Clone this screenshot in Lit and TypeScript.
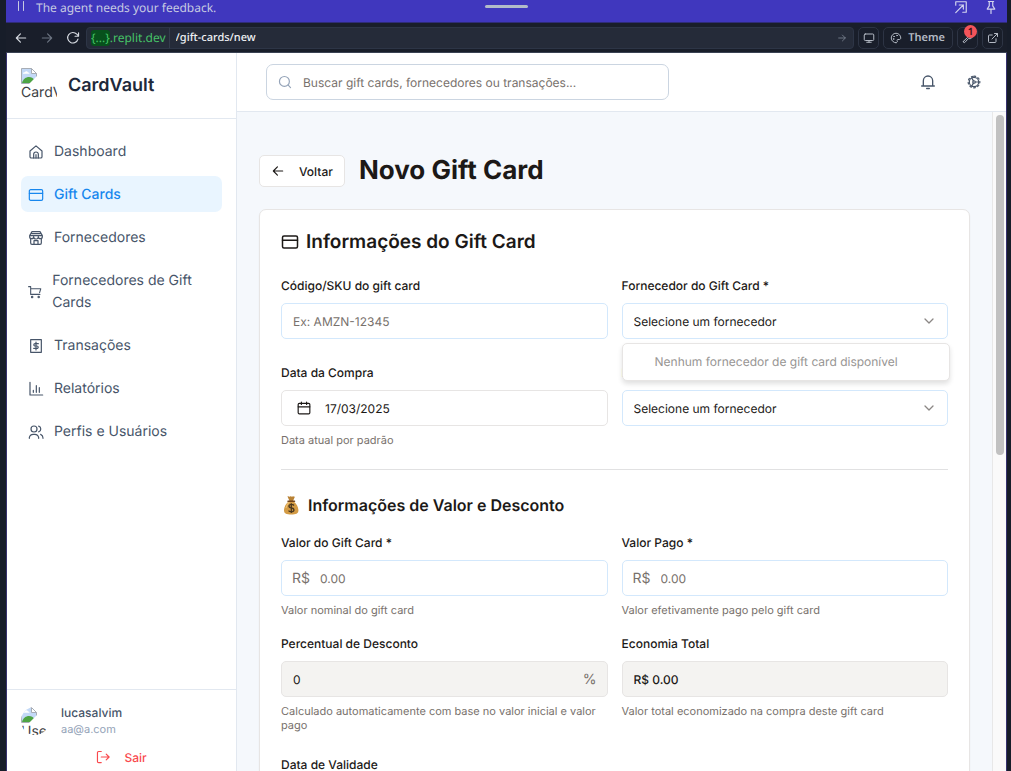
import { LitElement, html, svg, css, nothing, type SVGTemplateResult } from "lit";
import { customElement, property, state } from "lit/decorators.js";
import { classMap } from "lit/directives/class-map.js";

const icons: Record<string, SVGTemplateResult> = {
  home: svg`<path d="M3 10.5 12 2.8l9 7.7V19a2 2 0 0 1-2 2H5a2 2 0 0 1-2-2z"/><path d="M8.500 21v-5.500a3.500 3.500 0 0 1 7 0V21M12 16v5"/>`,
  card: svg`<rect x="2" y="4" width="20" height="16" rx="2"/><path d="M2 9.500h20"/>`,
  store: svg`<path d="M6 2.500h12l3.500 6v1.500a3 3 0 0 1-6 0 3.500 3.500 0 0 1-7 0 3 3 0 0 1-6 0V8.500zM2.500 8.500h19M4 13v6.500a2 2 0 0 0 2 2h12a2 2 0 0 0 2-2V13M9 21.500V16h6v5.500M6 5.500h12"/>`,
  cart: svg`<path d="M1 3h3.500v13H20M4.500 6.500h17L19.500 13"/><circle cx="7" cy="20.500" r="1.200"/><circle cx="18" cy="20.500" r="1.200"/>`,
  bill: svg`<path d="M4 2.500h16v19H4z"/><path d="M15.500 8.500H10.500a1.750 1.750 0 0 0 0 3.500h3a1.750 1.750 0 0 1 0 3.500H8.500M12 6v12"/>`,
  chart: svg`<path d="M3 2v19h19M8 14v3M12.500 7v10M17 10v7"/>`,
  users: svg`<circle cx="9" cy="7.500" r="4.500"/><path d="M2 21.500v-1a6 6 0 0 1 6-5h2a6 6 0 0 1 6 5v1M16 3.200a4.500 4.500 0 0 1 0 8.600M19 15.500a6 6 0 0 1 3.500 5.500v.5"/>`,
  logout: svg`<path d="M9 2.500H4.500a2 2 0 0 0-2 2v15a2 2 0 0 0 2 2H9M9 12h13M17.500 7l5 5-5 5"/>`,
  search: svg`<circle cx="11" cy="11" r="8.500"/><path d="m17.500 17.500 4 4"/>`,
  bell: svg`<path d="M5 17.500V10a7 7 0 0 1 14 0v7.500M2.500 18h19M10 21.700h4"/>`,
  gear: svg`<circle cx="12" cy="12" r="8"/><circle cx="12" cy="12" r="2.200"/><path d="M14 12h6M11 10 8 5M11 14l-3 5"/><path stroke-dasharray="3 4.070" d="M12 2a10 10 0 1 1 0 20 10 10 0 0 1 0-20"/>`,
  left: svg`<path d="M20 12H4M11 5l-7 7 7 7"/>`,
  right: svg`<path d="M4 12h16M13 5l7 7-7 7"/>`,
  reload: svg`<path d="M20.500 14a9 9 0 1 1-2-8.500L21.500 8.500M21.500 3v6h-6"/>`,
  calendar: svg`<rect x="2" y="4" width="20" height="18" rx="2"/><path d="M2 10h20M7.500 2v4M16.500 2v4"/>`,
  chevron: svg`<path d="m4 8 8 8 8-8" stroke-width="2.600"/>`,
  monitor: svg`<rect x="2.500" y="4" width="19" height="13" rx="2"/><path d="M12 17v3.500M7.500 20.500h9"/>`,
  palette: svg`<path d="M12 21.500A9.500 9.500 0 1 1 21.500 12c0 2-1.500 3-3.500 3h-2.500c-1.500 0-2 1.500-1 2.500s0 4-2.500 4"/><circle cx="8" cy="9" r=".7"/><circle cx="14" cy="7" r=".7"/><circle cx="7" cy="14" r=".7"/>`,
  wrench: svg`<path d="M3 18.500 11 11a6 6 0 0 1 7.500-8l-3.500 3.700 2.500 2.500L21 5.500a6 6 0 0 1-8 7.500l-7.500 8a1.800 1.800 0 0 1-2.500-2.500z"/>`,
  external: svg`<path d="M18 13.500V19a2 2 0 0 1-2 2H5a2 2 0 0 1-2-2V8a2 2 0 0 1 2-2h5.500M15 3h6v6M10 14 21 3"/>`,
  expand: svg`<path d="M3 9V3h18v18h-6M9 8.500h7v7M16 8.500 3 21.500"/>`,
  pin: svg`<path d="M7.500 2.500h9M9 2.500V10l-3.500 5.500h13L15 10V2.500M12 15.500V23"/>`,
  pause: svg`<path d="M7 3v18M17 3v18"/>`,
};

const icon = (name: string, cls = "") => html`
  <svg class="icon ${cls}" viewBox="0 0 24 24" aria-hidden="true">${icons[name]}</svg>`;

const iconStyles = css`
  .icon {
    width: 16px;
    height: 16px;
    flex: none;
    fill: none;
    stroke: currentColor;
    stroke-width: 2;
    stroke-linecap: round;
    stroke-linejoin: round;
  }
  .icon.s12 { width: 12px; height: 12px; }
  .icon.s14 { width: 14px; height: 14px; }
  .icon.s18 { width: 18px; height: 18px; }
  * { box-sizing: border-box; }
  button, input, select { font: inherit; color: inherit; margin: 0; text-rendering: inherit; }
  button { cursor: pointer; }
`;

@customElement("missing-image")
class MissingImage extends LitElement {
  @property() alt = "";

  static styles = css`
    :host {
      display: block;
      overflow: hidden;
      flex: none;
      font-size: 14px;
      line-height: 18px;
      color: #3c4043;
    }
    .picture { display: block; width: 16px; height: 16px; }
    .alt { display: block; overflow: hidden; white-space: nowrap; }
  `;

  render() {
    return html`
      <svg class="picture" viewBox="0 0 16 16" aria-hidden="true">
        <path d="M.5.500h10l5 5v5l-5 5H.5z" fill="#c3d9f7" stroke="#a7adb5"/>
        <path d="M2 5.500c0-1 1-1.500 1.800-1.300C4.500 3 6.500 3 7 4.500c1 0 1.500.5 1.500 1.300H2z" fill="#fff"/>
        <path d="M1 15c1-4 4-6 7-6 2.500 0 4 1 5 2.500L9.500 15z" fill="#4ea444"/>
        <path d="M10.500.500v5h5z" fill="#fff" stroke="#a7adb5"/>
        <path d="M8 16 16 8v8z" fill="#fff"/>
      </svg>
      <span class="alt">${this.alt}</span>`;
  }
}

@customElement("workspace-bar")
class WorkspaceBar extends LitElement {
  static styles = [
    iconStyles,
    css`
      :host { display: block; font-family: "Noto Sans", sans-serif; }
      .notice {
        display: grid;
        grid-template-columns: 1fr auto 1fr;
        height: 22px;
        padding: 0 9px;
        background: #4037be;
        color: #c6cae2;
        font-size: 12px;
        line-height: 16px;
      }
      .message { display: flex; gap: 9px; }
      .handle { width: 43px; height: 3px; margin-top: 5px; border-radius: 2px; background: #b2bbc9; }
      .tools { display: flex; justify-content: flex-end; gap: 16px; }
      .tools button { display: flex; padding: 0; border: 0; background: none; color: #d3d5ef; }
      .browser {
        display: flex;
        align-items: center;
        gap: 4px;
        height: 31px;
        padding: 0 4px 0 8px;
        border-top: 1px solid #2f2c78;
        border-bottom: 1px solid #3a4253;
        background: #191e2a;
        color: #c3c8d0;
        font-size: 11px;
      }
      .history { display: flex; gap: 12px; padding-right: 2px; }
      .history button { display: flex; padding: 0; border: 0; background: none; color: #d5d9e0; }
      .history button:disabled { color: #6c7482; }
      .address {
        display: flex;
        align-items: center;
        flex: 1;
        height: 22px;
        padding-right: 6px;
        border: 1px solid #2d3546;
        border-radius: 4px;
        background: #252b39;
        color: #7c8493;
      }
      .address .icon { width: 10px; height: 10px; }
      .host { display: flex; align-items: center; padding: 0 3px 0 4px; height: 20px; border-right: 1px solid #343c4c; color: #45c267; font-size: 12px; }
      .chip { border-radius: 3px; background: #07511c; line-height: 16px; }
      .path { flex: 1; min-width: 0; padding: 0 6px; border: 0; background: none; color: #f0f2f5; font-weight: 500; outline: 0; }
      .tool {
        position: relative;
        display: flex;
        align-items: center;
        justify-content: center;
        gap: 6px;
        min-width: 21px;
        height: 22px;
        padding: 0 3px;
        border: 1px solid #2d3444;
        border-radius: 5px;
        background: #191e2a;
        color: #b4bac4;
        font-weight: 600;
      }
      .theme { padding: 0 7px 0 6px; }
      .badge {
        position: absolute;
        top: -3px;
        right: 0;
        width: 13px;
        height: 13px;
        border-radius: 50%;
        background: #f4545a;
        color: #3c1014;
        font-size: 10px;
        line-height: 13px;
      }
    `,
  ];

  render() {
    return html`
      <div class="notice">
        <div class="message">${icon("pause", "s12")}<span>The agent needs your feedback.</span></div>
        <span class="handle"></span>
        <div class="tools">
          <button aria-label="Expand">${icon("expand", "s14")}</button>
          <button aria-label="Pin">${icon("pin", "s14")}</button>
        </div>
      </div>
      <div class="browser">
        <div class="history">
          <button aria-label="Back">${icon("left", "s14")}</button>
          <button aria-label="Forward" disabled>${icon("right", "s14")}</button>
          <button aria-label="Reload">${icon("reload", "s14")}</button>
        </div>
        <div class="address">
          <span class="host"><span class="chip">{...}</span>.replit.dev</span>
          <input class="path" aria-label="Path" value="/gift-cards/new">
          ${icon("right")}
        </div>
        <button class="tool" aria-label="Device">${icon("monitor", "s12")}</button>
        <button class="tool theme">${icon("palette", "s12")}Theme</button>
        <button class="tool" aria-label="Tools">${icon("wrench", "s12")}<span class="badge">1</span></button>
        <button class="tool" aria-label="Open in new tab">${icon("external", "s12")}</button>
      </div>`;
  }
}

@customElement("side-bar")
class SideBar extends LitElement {
  @state() private items = [
    { icon: "home", label: "Dashboard" },
    { icon: "card", label: "Gift Cards", active: true },
    { icon: "store", label: "Fornecedores" },
    { icon: "cart", label: "Fornecedores de Gift Cards" },
    { icon: "bill", label: "Transações" },
    { icon: "chart", label: "Relatórios" },
    { icon: "users", label: "Perfis e Usuários" },
  ];

  static styles = [
    iconStyles,
    css`
      :host {
        display: flex;
        flex-direction: column;
        width: 230px;
        flex: none;
        border-right: 1px solid #e2e8f0;
        background: #fff;
        color: #475569;
      }
      .brand {
        display: flex;
        align-items: center;
        gap: 11px;
        height: 66px;
        padding: 0 14px;
        border-bottom: 1px solid #e2e8f0;
      }
      .logo { width: 36px; height: 36px; }
      .name { color: #1e293b; font-size: 18px; font-weight: 600; }
      nav { display: flex; flex-direction: column; flex: 1; gap: 7px; padding: 14px; }
      .item {
        display: flex;
        align-items: center;
        gap: 10px;
        padding: 8px 7px 6px;
        border-radius: 7px;
        color: inherit;
        font-size: 14px;
        line-height: 22px;
        text-decoration: none;
      }
      .item .icon { flex: 0 1 auto; stroke-width: 1.8; }
      .active { background: #e9f5ff; color: #1787ee; font-weight: 500; }
      .account { padding: 15px 14px 0; border-top: 1px solid #e2e8f0; }
      .user { display: flex; align-items: center; gap: 12px; }
      .avatar { width: 28px; height: 28px; border-radius: 50%; }
      .who { display: flex; flex-direction: column; line-height: 16px; }
      .login { font-size: 12px; font-weight: 500; }
      .mail { color: #94a3b8; font-size: 11px; }
      .exit {
        display: flex;
        align-items: center;
        justify-content: center;
        gap: 14px;
        width: 100%;
        height: 28px;
        margin-top: 6px;
        border: 0;
        background: none;
        color: #f9494d;
        font-size: 12px;
        font-weight: 500;
      }
    `,
  ];

  render() {
    return html`
      <div class="brand">
        <missing-image class="logo" alt="CardVault"></missing-image>
        <span class="name">CardVault</span>
      </div>
      <nav>
        ${this.items.map(
          (i) => html`<a href="#" class=${classMap({ item: true, active: !!i.active })}>${icon(i.icon)}<span>${i.label}</span></a>`,
        )}
      </nav>
      <div class="account">
        <div class="user">
          <missing-image class="avatar" alt="User"></missing-image>
          <div class="who"><span class="login">lucasalvim</span><span class="mail">aa@a.com</span></div>
        </div>
        <button class="exit">${icon("logout", "s14")}Sair</button>
      </div>`;
  }
}

@customElement("gift-card-form")
class GiftCardForm extends LitElement {
  static styles = [
    iconStyles,
    css`
      :host { display: block; color: #1c1917; font-size: 12px; }
      .heading { display: flex; align-items: center; gap: 14px; height: 36px; margin-bottom: 20px; }
      h1, h2, h3 { margin: 0; }
      h1 { font-size: 26px; font-weight: 700; line-height: 36px; }
      .back {
        display: flex;
        align-items: center;
        gap: 14px;
        height: 32px;
        padding: 0 11px;
        border: 1px solid #e7e5e4;
        border-radius: 5px;
        background: #fff;
        font-weight: 500;
      }
      .card { padding: 21px; border: 1px solid #e7e5e4; border-radius: 7px; background: #fff; box-shadow: 0 1px 2px #0000000d; }
      h2 { display: flex; align-items: center; gap: 7px; margin-bottom: 23px; font-size: 19px; font-weight: 600; line-height: 22px; }
      h3 { display: flex; align-items: center; gap: 7px; margin-bottom: 16px; font-size: 16px; font-weight: 600; line-height: 24px; }
      .bag { width: 20px; height: 20px; flex: none; }
      .grid { display: grid; grid-template-columns: 1fr 1fr; gap: 24px 14px; }
      .values { row-gap: 17px; margin-bottom: 23px; }
      .field { display: flex; flex-direction: column; gap: 7px; min-width: 0; }
      label { font-weight: 500; line-height: 20px; }
      .control {
        position: relative;
        display: flex;
        align-items: center;
        height: 36px;
        border: 1px solid #d3e8fc;
        border-radius: 5px;
        background: #fff;
      }
      .control input, .control select {
        flex: 1;
        min-width: 0;
        width: 100%;
        height: 34px;
        padding: 0 11px;
        border: 0;
        background: none;
        outline: 0;
        appearance: none;
      }
      input::placeholder { color: #78716c; opacity: 1; }
      .affix { color: #78716c; font-size: 14px; padding: 0 10px; }
      .control .affix + input { padding-left: 0; }
      .quiet { border-color: #e7e5e4; }
      .readonly { border-color: #e7e5e4; background: #f4f3f1; }
      .strong { font-weight: 500; }
      .arrow { position: absolute; right: 12px; color: #8b8785; pointer-events: none; }
      .date { gap: 14px; padding: 0 15px; text-align: left; }
      .hint { margin: 0; color: #78716c; font-size: 11px; line-height: 14px; }
      .menu {
        position: absolute;
        z-index: 1;
        top: 39px;
        left: -1px;
        right: -3px;
        margin: 0;
        padding: 4px;
        border: 1px solid #e7e5e4;
        border-radius: 5px;
        background: #fff;
        box-shadow: 0 3px 5px #0000001f;
        list-style: none;
      }
      .option { padding: 0 28px; color: #979593; line-height: 28px; white-space: nowrap; }
      hr { height: 1px; margin: 22px 0 23px; border: 0; background: #e1e1e2; }
    `,
  ];

  private select(id: string, label: string, open = false) {
    return html`
      <div class="field">
        <label for=${id}>${label}</label>
        <div class="control">
          <select id=${id}><option>Selecione um fornecedor</option></select>
          ${icon("chevron", "s12 arrow")}
          ${open
            ? html`<ul class="menu" role="listbox" aria-label=${label}>
                <li class="option" role="option" aria-disabled="true">Nenhum fornecedor de gift card disponível</li>
              </ul>`
            : nothing}
        </div>
      </div>`;
  }

  private money(id: string, label: string, hint: string) {
    return html`
      <div class="field">
        <label for=${id}>${label}</label>
        <div class="control"><span class="affix">R$</span><input id=${id} placeholder="0.00" inputmode="decimal"></div>
        <p class="hint">${hint}</p>
      </div>`;
  }

  render() {
    return html`
      <div class="heading">
        <button class="back">${icon("left", "s14")}Voltar</button>
        <h1>Novo Gift Card</h1>
      </div>
      <form class="card">
        <h2>${icon("card", "s18")}Informações do Gift Card</h2>
        <div class="grid">
          <div class="field">
            <label for="code">Código/SKU do gift card</label>
            <div class="control"><input id="code" placeholder="Ex: AMZN-12345"></div>
          </div>
          ${this.select("card-supplier", "Fornecedor do Gift Card *", true)}
          <div class="field">
            <label for="bought">Data da Compra</label>
            <button type="button" id="bought" class="control quiet date">${icon("calendar", "s14")}17/03/2025</button>
            <p class="hint">Data atual por padrão</p>
          </div>
          ${this.select("supplier", "Fornecedor *")}
        </div>
        <hr>
        <h3>
          <svg class="bag" viewBox="0 0 20 20" aria-hidden="true">
            <path d="M6.500 1.500 8.500 6h3.500l2-4.500c-1 .8-1.600-.8-2.500 0-.8.700-1.500-.7-2.400 0-.8.600-1.600-.6-2.600 0z" fill="#b98235"/>
            <path d="M7.500 6.500C4.500 9 3 12.500 3 15.500c0 3 2.500 4 7.200 4s7.200-1 7.200-4c0-3-1.500-6.500-4.600-9z" fill="#d39b45"/>
            <path d="M5 13c.5-2.500 1.600-4.500 3.400-6" fill="none" stroke="#edbf71" stroke-width="1.200"/>
            <path d="M7 6.300h6.500" stroke="#71431b" stroke-width="1.500" stroke-linecap="round"/>
            <path d="M13 10.500c-.6-.8-1.500-1.100-2.600-1.100-3.300 0-3.300 3.200 0 3.600 3.400.4 3.400 3.800 0 3.800-1.300 0-2.300-.4-2.900-1.200M10.300 8.200v9.800" fill="none" stroke="#4b3920" stroke-width="1.300"/>
          </svg>
          Informações de Valor e Desconto
        </h3>
        <div class="grid values">
          ${this.money("value", "Valor do Gift Card *", "Valor nominal do gift card")}
          ${this.money("paid", "Valor Pago *", "Valor efetivamente pago pelo gift card")}
          <div class="field">
            <label for="discount">Percentual de Desconto</label>
            <div class="control readonly"><input id="discount" value="0" readonly><span class="affix">%</span></div>
            <p class="hint">Calculado automaticamente com base no valor inicial e valor pago</p>
          </div>
          <div class="field">
            <label for="saved">Economia Total</label>
            <div class="control readonly"><input id="saved" class="strong" value="R$ 0.00" readonly></div>
            <p class="hint">Valor total economizado na compra deste gift card</p>
          </div>
        </div>
        <div class="grid">
          <div class="field">
            <label for="expires">Data de Validade</label>
            <div class="control"><input id="expires"></div>
          </div>
        </div>
      </form>`;
  }
}

@customElement("app-root")
class AppRoot extends LitElement {
  static styles = [
    iconStyles,
    css`
      :host {
        display: flex;
        flex-direction: column;
        height: 100vh;
        overflow: hidden;
        padding: 0 4px 0 6px;
        background: #171d29;
        font-family: Inter, "Liberation Sans", sans-serif;
        text-rendering: geometricPrecision;
        box-sizing: border-box;
      }
      .window { display: flex; flex: 1; min-height: 0; border: solid #37326f; border-width: 0 1px; background: #f5f8fc; }
      .page { display: flex; flex-direction: column; flex: 1; min-width: 0; }
      header {
        display: flex;
        align-items: center;
        justify-content: space-between;
        flex: none;
        height: 59px;
        padding: 0 25px 0 29px;
        border-bottom: 1px solid #e2e8f0;
        background: #fff;
      }
      .search {
        display: flex;
        align-items: center;
        gap: 11px;
        width: 403px;
        height: 36px;
        padding: 0 11px;
        border: 1px solid #cbd5e1;
        border-radius: 7px;
        color: #94a3b8;
      }
      .search input { flex: 1; min-width: 0; padding: 0; border: 0; outline: 0; background: none; font-size: 12px; }
      .search input::placeholder { color: #78716c; opacity: 1; }
      .actions { display: flex; align-items: center; gap: 31px; }
      .actions button { display: flex; padding: 0; border: 0; background: none; color: #475569; }
      .view { display: flex; flex: 1; min-height: 0; }
      .scroll { flex: 1; min-width: 0; overflow-y: auto; scrollbar-width: none; padding: 41px 22px 22px; }
      .rail { width: 14px; padding: 3px; border-left: 1px solid #e8e8e8; background: #fafafa; }
      .thumb { width: 8px; height: 52%; border-radius: 4px; background: #c1c1c1; }
    `,
  ];

  render() {
    return html`
      <workspace-bar></workspace-bar>
      <div class="window">
        <side-bar></side-bar>
        <div class="page">
          <header>
            <label class="search">
              ${icon("search", "s14")}
              <input type="text" aria-label="Buscar" placeholder="Buscar gift cards, fornecedores ou transações...">
            </label>
            <div class="actions">
              <button aria-label="Notificações">${icon("bell")}</button>
              <button aria-label="Configurações">${icon("gear", "s14")}</button>
            </div>
          </header>
          <div class="view">
            <main class="scroll"><gift-card-form></gift-card-form></main>
            <div class="rail"><div class="thumb"></div></div>
          </div>
        </div>
      </div>`;
  }
}
